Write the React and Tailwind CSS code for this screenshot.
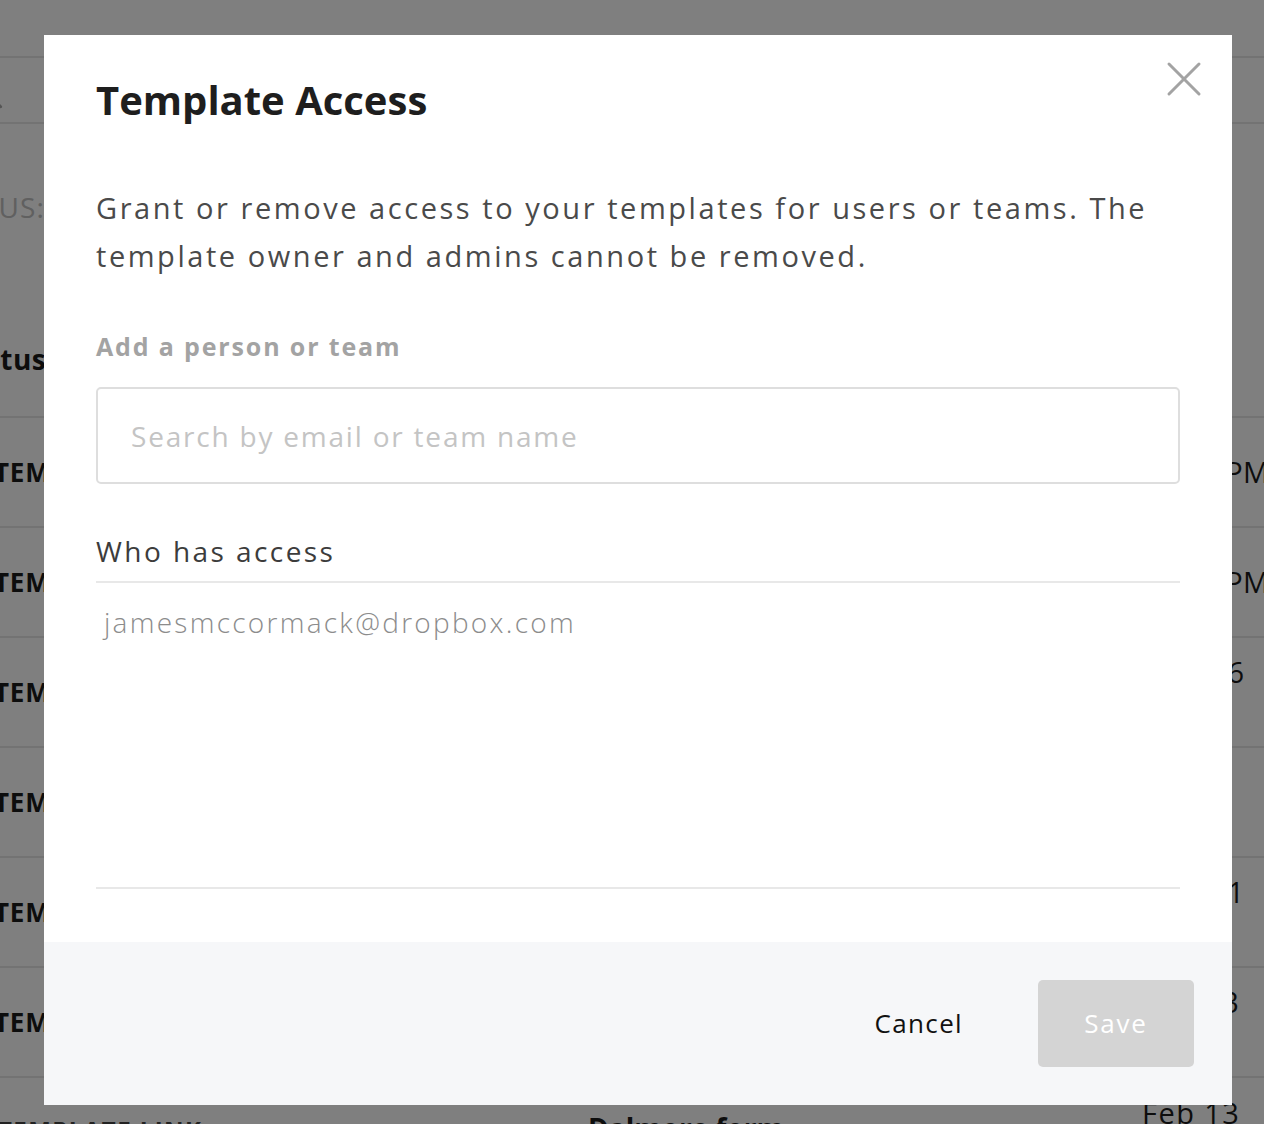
import React from 'react';
import { Search } from 'lucide-react';

// rows of the templates table sitting behind the dialog
const rows = [
  { name: 'TEMPLATE', date: '10:45 PM', time: true },
  { name: 'TEMPLATE', date: '10:12 PM', time: true },
  { name: 'TEMPLATE', date: 'Mar 16', sub: '2018' },
  { name: 'TEMPLATE', date: 'Feb 9', sub: '2018' },
  { name: 'TEMPLATE', date: 'Mar 11', sub: '2018' },
  { name: 'TEMPLATE', date: 'Feb 13', sub: '2018' },
];

const CloseIcon = () => (
  <svg width="36" height="36" viewBox="0 0 36 36" fill="none" stroke="#a3a3a3" strokeWidth="3" strokeLinecap="round">
    <line x1="3" y1="3" x2="33" y2="33" />
    <line x1="33" y1="3" x2="3" y2="33" />
  </svg>
);

const App = () => {
  return (
    <div className="relative h-[1124px] w-full overflow-hidden bg-white font-['Open_Sans',sans-serif] text-[#1a1a1a]">
      {/* Page behind the modal */}
      <div className="pt-[56px]">
        <div className="flex h-[68px] items-center border-y-2 border-[#e6e6e6]">
          <Search className="-ml-[22px] mt-[14px] h-[26px] w-[26px] text-[#aaa]" strokeWidth={2.5} />
        </div>
        <div className="-ml-[70px] mt-[67px] text-[28px] leading-[32px] tracking-[0.04em] text-[#c0c0c0]">
          STATUS:
        </div>
        <div className="mt-[79px] flex h-[116px] items-center border-b-2 border-[#e6e6e6]">
          <span className="-ml-[46px] text-[28px] font-bold tracking-[0.02em]">Status</span>
        </div>
        {rows.map((r, i) => (
          <div key={i} className="flex h-[110px] items-center border-b-2 border-[#e6e6e6]">
            <div className="-ml-[6px] w-[594px] shrink-0 text-[26px] font-bold tracking-[0.03em]">{r.name}</div>
            <div className="w-[554px] shrink-0 text-[26px]">Template</div>
            <div
              className={
                r.time
                  ? 'whitespace-nowrap text-[29px] leading-[32px] tracking-[0.01em]'
                  : 'flex flex-col gap-[8px] whitespace-nowrap text-[29px] leading-[32px] tracking-[0.05em]'
              }
            >
              <span>{r.date}</span>
              {r.sub && <span className="text-[#999]">{r.sub}</span>}
            </div>
          </div>
        ))}
        <div className="flex h-[110px] items-start">
          <div className="-ml-[2px] w-[590px] shrink-0 pt-[36px] text-[24px] font-bold leading-[32px] tracking-[0.06em] text-[#444]">
            TEMPLATE LINK
          </div>
          <div className="w-[554px] shrink-0 pt-[34px] text-[28px] font-bold leading-[32px]">Dalmore form</div>
          <div className="flex flex-col gap-[8px] whitespace-nowrap pt-[19px] text-[29px] leading-[32px] tracking-[0.05em]">
            <span>Feb 13</span>
            <span className="text-[#999]">2018</span>
          </div>
        </div>
      </div>

      {/* Dim overlay */}
      <div className="absolute inset-0 bg-black/50" />

      {/* Template Access dialog */}
      <div className="absolute left-[44px] top-[35px] flex h-[1070px] w-[1188px] flex-col bg-white">
        <button className="absolute right-[30px] top-[26px]">
          <CloseIcon />
        </button>

        <div className="flex-1 px-[52px] pt-[41px]">
          <h2 className="text-[40px] font-bold leading-[48px] text-[#1e1e1e]">Template Access</h2>

          <p className="mt-[60px] text-[29px] leading-[48px] tracking-[0.088em] text-[#4a4a4a]">
            Grant or remove access to your templates for users or teams. The
            <br />
            template owner and admins cannot be removed.
          </p>

          <div className="mt-[50px] text-[25px] font-bold leading-[32px] tracking-[0.074em] text-[#a3a3a3]">
            Add a person or team
          </div>

          <input
            className="mt-[25px] h-[97px] w-full rounded-[5px] border-2 border-[#dedede] px-[33px] text-[28px] tracking-[0.064em] text-[#333] outline-none placeholder:text-[#c4c4c4]"
            placeholder="Search by email or team name"
          />

          <div className="mt-[51px] border-b-2 border-[#e8e8e8] pb-[14px] text-[28px] leading-[32px] tracking-[0.087em] text-[#3c3c3c]">
            Who has access
          </div>

          <div className="h-[306px] border-b-2 border-[#e8e8e8] pt-[23px]">
            <div className="pl-[8px] text-[28px] font-light leading-[32px] tracking-[0.081em] text-[#8c8c8c]">
              jamesmccormack@dropbox.com
            </div>
          </div>
        </div>

        <div className="flex h-[163px] items-center justify-end gap-[75px] bg-[#f6f7f9] pr-[38px]">
          <button className="text-[26px] tracking-[0.052em] text-[#111]">Cancel</button>
          <button className="h-[87px] w-[156px] rounded-[5px] bg-[#d4d4d4] text-[26px] tracking-[0.07em] text-white">
            Save
          </button>
        </div>
      </div>
    </div>
  );
};

export default App;
